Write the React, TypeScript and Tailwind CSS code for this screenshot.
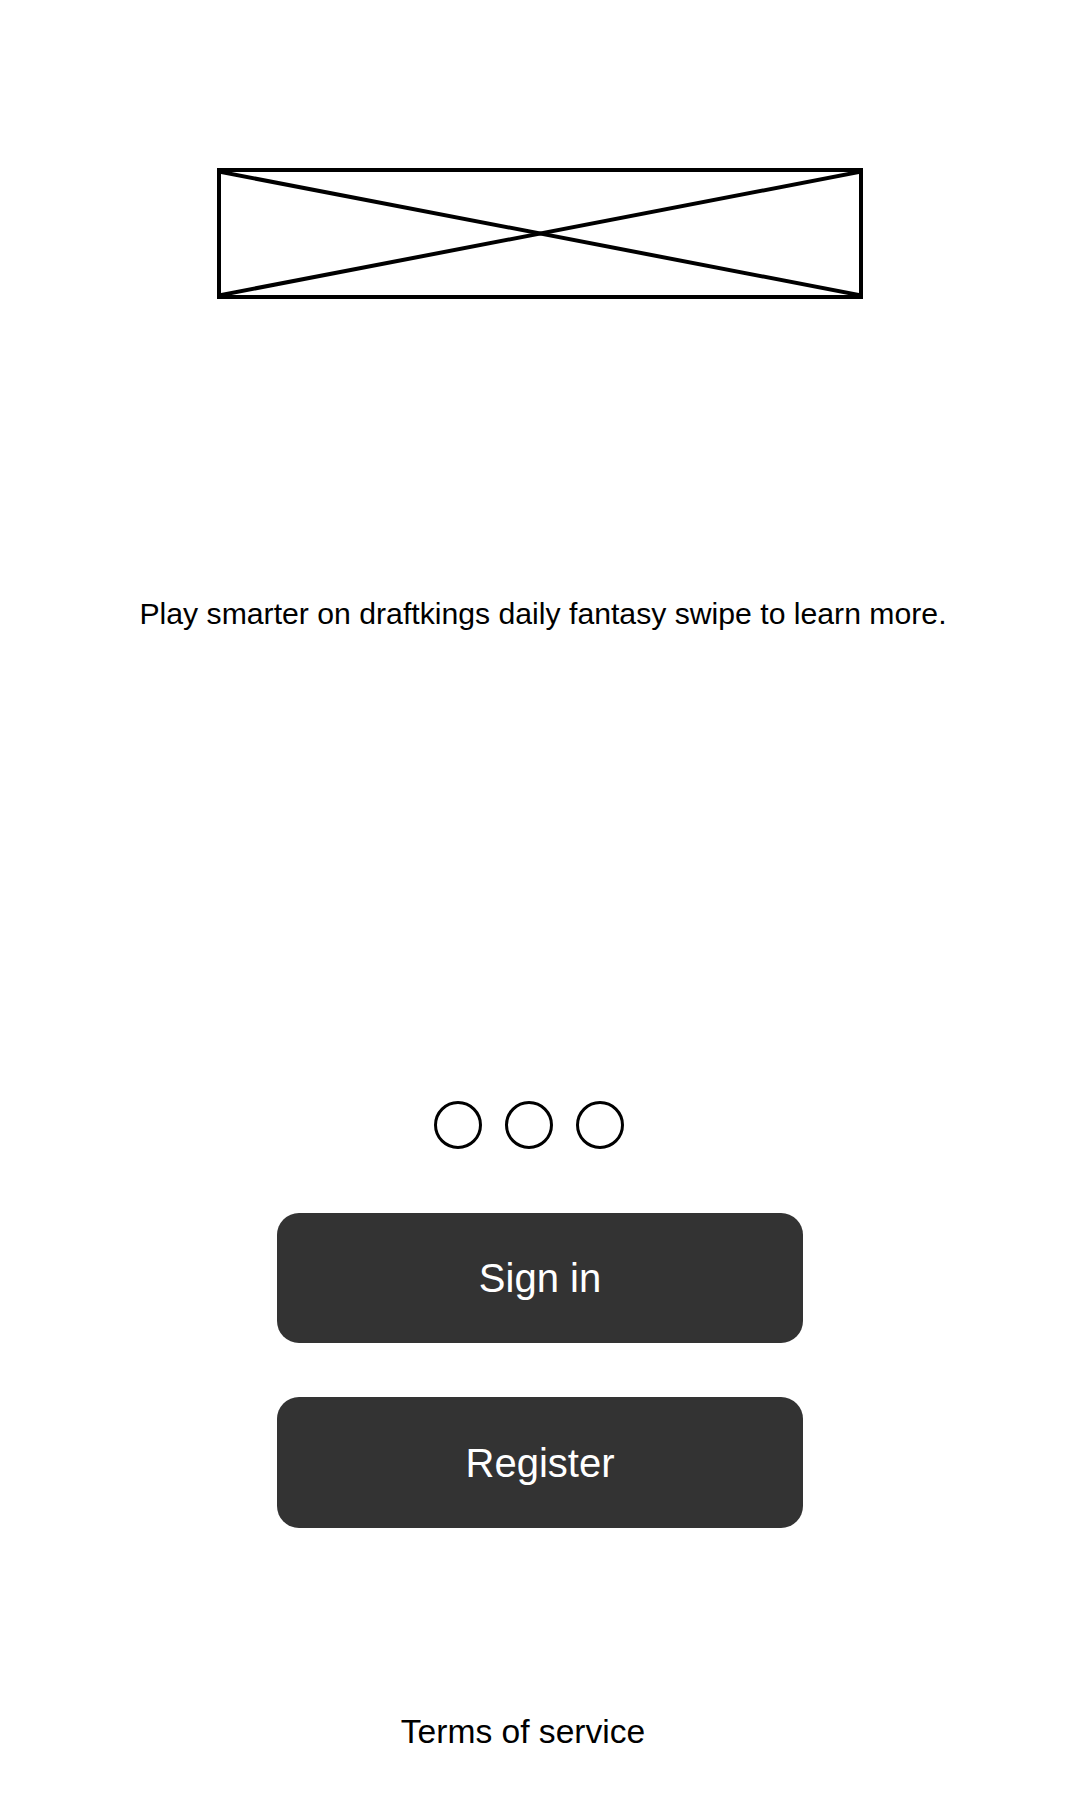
import React from "react";

export default function App() {
  return (
    <div
      className="w-[1080px] h-[1800px] bg-white flex flex-col items-center text-black"
      style={{ fontFamily: '"Liberation Sans", Arial, sans-serif' }}
    >
      <div className="mt-[168px] w-[646px] h-[131px] border-[4px] border-black relative">
        <svg className="absolute inset-0 w-full h-full" viewBox="0 0 638 123" preserveAspectRatio="none">
          <line x1="0" y1="0" x2="638" y2="123" stroke="black" strokeWidth="4" />
          <line x1="0" y1="123" x2="638" y2="0" stroke="black" strokeWidth="4" />
        </svg>
      </div>
      <p className="mt-[297px] ml-[6px] text-[30.2px] leading-[36px] whitespace-nowrap">
        Play smarter on draftkings daily fantasy swipe to learn more.
      </p>
      <div className="mt-[469px] mr-[23px] flex gap-[23px]">
        <div className="w-[48px] h-[48px] rounded-full border-[3px] border-black" />
        <div className="w-[48px] h-[48px] rounded-full border-[3px] border-black" />
        <div className="w-[48px] h-[48px] rounded-full border-[3px] border-black" />
      </div>
      <button className="mt-[64px] w-[526px] h-[130px] rounded-[22px] bg-[#333333] text-white text-[40px] flex items-center justify-center">
        Sign in
      </button>
      <button className="mt-[54px] w-[526px] h-[131px] rounded-[22px] bg-[#333333] text-white text-[40px] flex items-center justify-center">
        Register
      </button>
      <p className="mt-[184px] mr-[34px] text-[33.6px] leading-[40px] whitespace-nowrap">Terms of service</p>
    </div>
  );
}
